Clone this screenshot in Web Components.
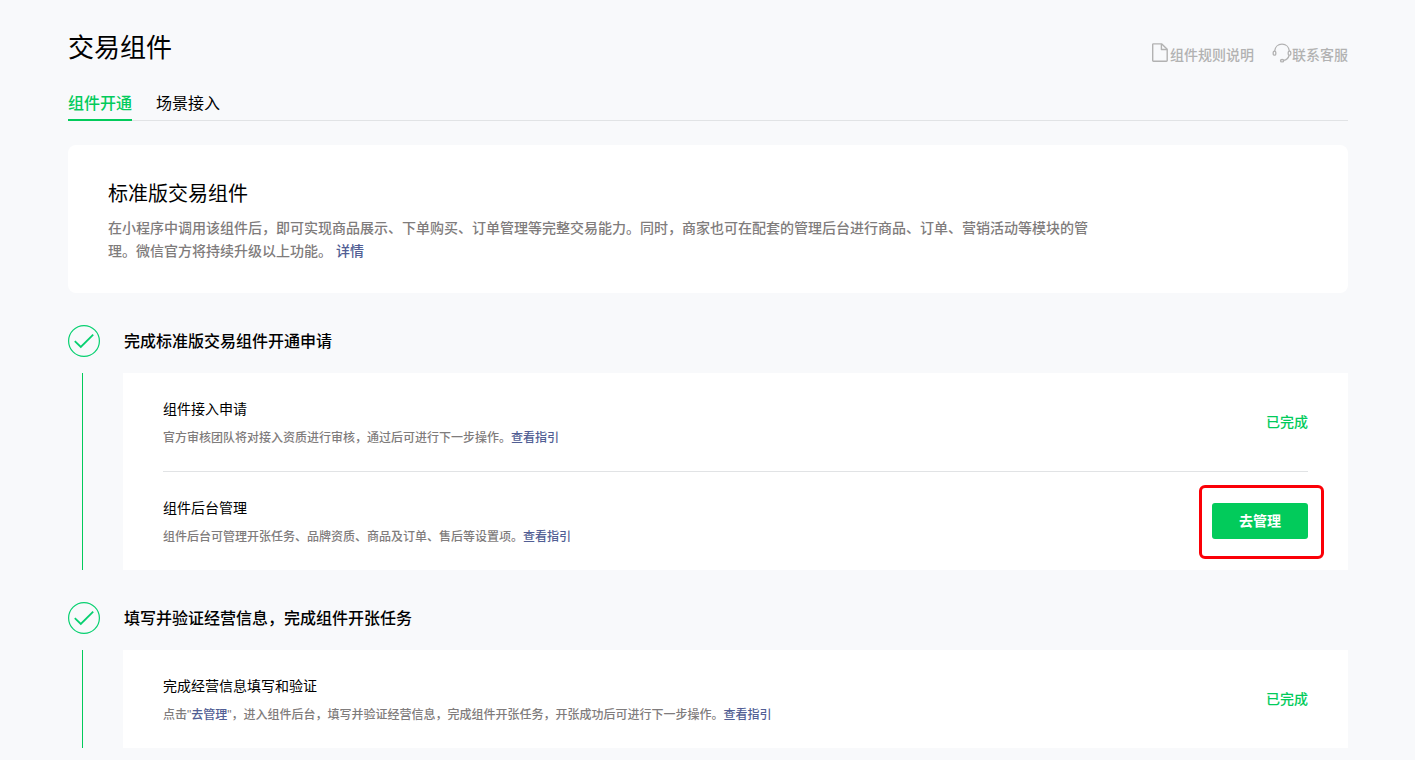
<!DOCTYPE html>
<html lang="zh-CN">
<head>
<meta charset="UTF-8">
<meta name="viewport" content="width=device-width, initial-scale=1">
<title>交易组件</title>
<style>
  :root {
    --green: #02cb5b;
    --link: #515e94;
    --muted: #7f7c7c;
    --line: #e1e3e5;
  }
  body {
    margin: 0;
    background: #f8f9fb;
    color: #000;
    font-family: "Liberation Sans", "Noto Sans CJK SC", sans-serif;
    font-size: 14px;
    line-height: 24px;
  }
  main {
    padding: 28px 67px 12px 68px;
  }
</style>
</head>
<body>
<main>
  <page-header heading="交易组件">
    <help-link icon="doc">组件规则说明</help-link>
    <help-link icon="service">联系客服</help-link>
  </page-header>

  <tab-bar>
    <tab-item active>组件开通</tab-item>
    <tab-item>场景接入</tab-item>
  </tab-bar>

  <intro-card heading="标准版交易组件">在小程序中调用该组件后，即可实现商品展示、下单购买、订单管理等完整交易能力。同时，商家也可在配套的管理后台进行商品、订单、营销活动等模块的管理。微信官方将持续升级以上功能。 <text-link>详情</text-link></intro-card>

  <step-section heading="完成标准版交易组件开通申请">
    <task-item heading="组件接入申请">
      官方审核团队将对接入资质进行审核，通过后可进行下一步操作。<text-link>查看指引</text-link>
      <status-label slot="action">已完成</status-label>
    </task-item>
    <task-item heading="组件后台管理">
      组件后台可管理开张任务、品牌资质、商品及订单、售后等设置项。<text-link>查看指引</text-link>
      <primary-button slot="action" marked>去管理</primary-button>
    </task-item>
  </step-section>

  <step-section heading="填写并验证经营信息，完成组件开张任务">
    <task-item heading="完成经营信息填写和验证">
      点击"<text-link>去管理</text-link>"，进入组件后台，填写并验证经营信息，完成组件开张任务，开张成功后可进行下一步操作。<text-link>查看指引</text-link>
      <status-label slot="action">已完成</status-label>
    </task-item>
  </step-section>
</main>

<script>
class PageHeader extends HTMLElement {
  connectedCallback() {
    this.attachShadow({ mode: 'open' });
    this.shadowRoot.innerHTML = `
      <style>
        :host { display: block; }
        header {
          display: flex;
          justify-content: space-between;
          align-items: center;
        }
        h1 {
          margin: 0;
          font-size: 26px;
          font-weight: 400;
          line-height: 40px;
        }
        nav {
          display: flex;
          gap: 18px;
          padding-top: 14px;
        }
      </style>
      <header>
        <h1>${this.getAttribute('heading')}</h1>
        <nav><slot></slot></nav>
      </header>
    `;
  }
}

const helpIcons = {
  doc: `
    <svg width="18" height="20" viewBox="0 0 18 20" fill="none" stroke="#b2b2b2" stroke-width="1.4" stroke-linejoin="round">
      <path d="M1.4.9h8.4l5.4 5.4v11.3a.7.7 0 0 1-.7.7H1.4a.7.7 0 0 1-.7-.7V1.6a.7.7 0 0 1 .7-.7z"/>
      <path d="M9.4.9v5.6h5.6"/>
    </svg>`,
  service: `
    <svg width="20" height="20" viewBox="0 0 20 20" fill="none" stroke="#b2b2b2" stroke-width="1.3">
      <path d="M2.6 8.2C3 4 6 1.2 10 1.2S17 4 17.4 8.2"/>
      <rect x="1.2" y="8.2" width="2.6" height="4" rx="1.3"/>
      <rect x="16.2" y="8.2" width="2.6" height="4" rx="1.3"/>
      <path d="M17.2 12.2c-.8 2.8-2.8 4.6-5.6 5.2"/>
      <ellipse cx="10.1" cy="17.7" rx="1.6" ry="1.2"/>
    </svg>`
};

class HelpLink extends HTMLElement {
  connectedCallback() {
    this.attachShadow({ mode: 'open' });
    this.shadowRoot.innerHTML = `
      <style>
        :host { display: block; }
        a {
          display: flex;
          align-items: center;
          color: #b2b2b2;
          font-weight: 500;
          line-height: 20px;
          text-decoration: none;
        }
        a:hover { color: #8c8c8c; }
        svg { display: block; margin-bottom: 4px; }
      </style>
      <a href="#">${helpIcons[this.getAttribute('icon')]}<span><slot></slot></span></a>
    `;
  }
}

class TabBar extends HTMLElement {
  connectedCallback() {
    this.attachShadow({ mode: 'open' });
    this.shadowRoot.innerHTML = `
      <style>
        :host {
          display: flex;
          gap: 24px;
          margin: 24px 0;
          border-bottom: 1px solid var(--line);
        }
      </style>
      <slot></slot>
    `;
  }
}

class TabItem extends HTMLElement {
  connectedCallback() {
    this.attachShadow({ mode: 'open' });
    this.shadowRoot.innerHTML = `
      <style>
        :host {
          display: block;
          margin-bottom: -1px;
        }
        button {
          display: block;
          padding: 0 0 3px;
          border: 0;
          border-bottom: 2px solid transparent;
          background: none;
          color: inherit;
          font: inherit;
          font-size: 16px;
          line-height: 24px;
          cursor: pointer;
        }
        :host([active]) button {
          border-color: var(--green);
          color: var(--green);
          font-weight: 500;
        }
      </style>
      <button type="button"><slot></slot></button>
    `;
  }
}

class TextLink extends HTMLElement {
  connectedCallback() {
    this.attachShadow({ mode: 'open' });
    // no white space round the link: it sits inside running text
    this.shadowRoot.innerHTML = `<style>
        :host { display: inline; }
        a { color: var(--link); text-decoration: none; }
        a:hover { text-decoration: underline; }
      </style><a href="#"><slot></slot></a>`;
  }
}

class IntroCard extends HTMLElement {
  connectedCallback() {
    this.attachShadow({ mode: 'open' });
    this.shadowRoot.innerHTML = `
      <style>
        :host {
          display: block;
          padding: 32px 40px 30px;
          border-radius: 8px;
          background: #fff;
        }
        h2 {
          margin: 0 0 6px;
          font-size: 20px;
          font-weight: 400;
          line-height: 34px;
        }
        p {
          max-width: 980px;
          margin: 0;
          color: var(--muted);
          font-weight: 500;
          line-height: 23px;
        }
      </style>
      <h2>${this.getAttribute('heading')}</h2>
      <p><slot></slot></p>
    `;
  }
}

class StepSection extends HTMLElement {
  connectedCallback() {
    this.attachShadow({ mode: 'open' });
    this.shadowRoot.innerHTML = `
      <style>
        :host { display: block; margin-top: 32px; }
        .head {
          display: flex;
          align-items: center;
          gap: 24px;
          margin-bottom: 16px;
        }
        svg { display: block; }
        h3 {
          margin: 0;
          padding-top: 2px;
          font-size: 16px;
          font-weight: 500;
          line-height: 24px;
        }
        .body { display: flex; gap: 40px; }
        .rail {
          flex: none;
          width: 14px;
          border-right: 1px solid var(--green);
        }
        .panel { flex: 1; background: #fff; padding: 0 40px; }
        ::slotted(task-item:not(:first-child)) {
          border-top: 1px solid var(--line);
        }
      </style>
      <div class="head">
        <svg width="32" height="32" viewBox="0 0 32 32" fill="none" stroke="#07d070">
          <circle cx="16" cy="16" r="15.4" stroke-width="1.2"/>
          <path d="M6.8 16.2l6 5.8L25.2 9.6" stroke-width="1.8"/>
        </svg>
        <h3>${this.getAttribute('heading')}</h3>
      </div>
      <div class="body">
        <div class="rail"></div>
        <div class="panel"><slot></slot></div>
      </div>
    `;
  }
}

class TaskItem extends HTMLElement {
  connectedCallback() {
    this.attachShadow({ mode: 'open' });
    this.shadowRoot.innerHTML = `
      <style>
        :host {
          display: flex;
          justify-content: space-between;
          align-items: center;
          gap: 24px;
          padding: 23px 0;
        }
        h4 {
          margin: 0 0 6px;
          font-size: 14px;
          font-weight: 400;
          line-height: 26px;
        }
        p {
          margin: 0;
          color: var(--muted);
          font-size: 12px;
          font-weight: 500;
          line-height: 20px;
        }
      </style>
      <div>
        <h4>${this.getAttribute('heading')}</h4>
        <p><slot></slot></p>
      </div>
      <slot name="action"></slot>
    `;
  }
}

class StatusLabel extends HTMLElement {
  connectedCallback() {
    this.attachShadow({ mode: 'open' });
    this.shadowRoot.innerHTML = `
      <style>
        :host {
          display: block;
          flex: none;
          color: var(--green);
          font-weight: 500;
        }
      </style>
      <slot></slot>
    `;
  }
}

class PrimaryButton extends HTMLElement {
  connectedCallback() {
    this.attachShadow({ mode: 'open' });
    this.shadowRoot.innerHTML = `
      <style>
        :host {
          display: block;
          flex: none;
          position: relative;
        }
        button {
          display: block;
          min-width: 96px;
          height: 36px;
          border: 0;
          border-radius: 3px;
          background: var(--green);
          color: #fff;
          font: inherit;
          font-weight: 700;
          cursor: pointer;
        }
        /* red frame that points the reader to the button */
        :host([marked])::after {
          content: '';
          position: absolute;
          inset: -18px -16px -20px -13px;
          border: 3px solid #fb0007;
          border-radius: 6px;
          pointer-events: none;
        }
      </style>
      <button type="button"><slot></slot></button>
    `;
  }
}

customElements.define('page-header', PageHeader);
customElements.define('help-link', HelpLink);
customElements.define('tab-bar', TabBar);
customElements.define('tab-item', TabItem);
customElements.define('text-link', TextLink);
customElements.define('intro-card', IntroCard);
customElements.define('step-section', StepSection);
customElements.define('task-item', TaskItem);
customElements.define('status-label', StatusLabel);
customElements.define('primary-button', PrimaryButton);
</script>
</body>
</html>
